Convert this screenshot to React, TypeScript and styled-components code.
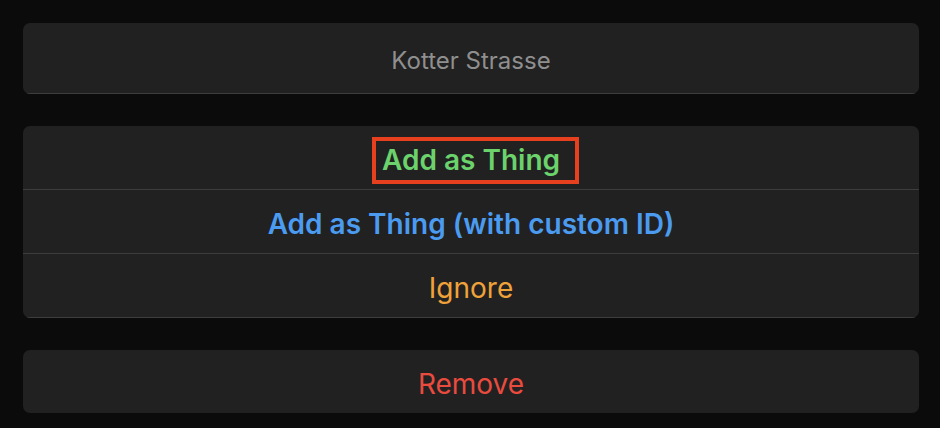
import React from "react";
import styled, { createGlobalStyle } from "styled-components";

const Global = createGlobalStyle`
  html, body { margin: 0; padding: 0; background: #0b0b0b; }
  body { font-family: Inter, "Noto Sans", sans-serif; -webkit-font-smoothing: antialiased; }
`;

const Page = styled.div`
  width: 940px;
  height: 428px;
  box-sizing: border-box;
  padding: 23px 21px 0 23px;
  display: flex;
  flex-direction: column;
  gap: 32px;
  background: #0b0b0b;
`;

const Card = styled.div`
  background: #212121;
  border-radius: 7px;
  overflow: hidden;
  display: flex;
  flex-direction: column;
`;

const Row = styled.div<{ $h: number; $border?: boolean }>`
  height: ${(p) => p.$h}px;
  box-sizing: border-box;
  padding-top: 5px;
  display: flex;
  align-items: center;
  justify-content: center;
  border-bottom: ${(p) => (p.$border ? "1px solid #3d3d3d" : "none")};
`;

const Label = styled.span<{ $color: string; $weight: number; $size: number }>`
  position: relative;
  color: ${(p) => p.$color};
  font-size: ${(p) => p.$size}px;
  font-weight: ${(p) => p.$weight};
  line-height: 1;
`;

const Highlight = styled.span`
  position: absolute;
  left: -10px;
  right: -19px;
  top: -9px;
  bottom: -10px;
  border: 4px solid #e6401f;
  pointer-events: none;
`;

export default function App() {
  return (
    <>
      <Global />
      <Page>
        <Card>
          <Row $h={71} $border>
            <Label $color="#8f8f8f" $weight={400} $size={24}>Kotter Strasse</Label>
          </Row>
        </Card>
        <Card>
          <Row $h={64} $border>
            <Label $color="#6bd26c" $weight={600} $size={28}>
              Add as Thing
              <Highlight />
            </Label>
          </Row>
          <Row $h={64} $border>
            <Label $color="#4b9bf0" $weight={600} $size={28}>Add as Thing (with custom ID)</Label>
          </Row>
          <Row $h={64} $border>
            <Label $color="#f0a23a" $weight={400} $size={28}>Ignore</Label>
          </Row>
        </Card>
        <Card>
          <Row $h={63}>
            <Label $color="#ea4b3f" $weight={400} $size={28}>Remove</Label>
          </Row>
        </Card>
      </Page>
    </>
  );
}
